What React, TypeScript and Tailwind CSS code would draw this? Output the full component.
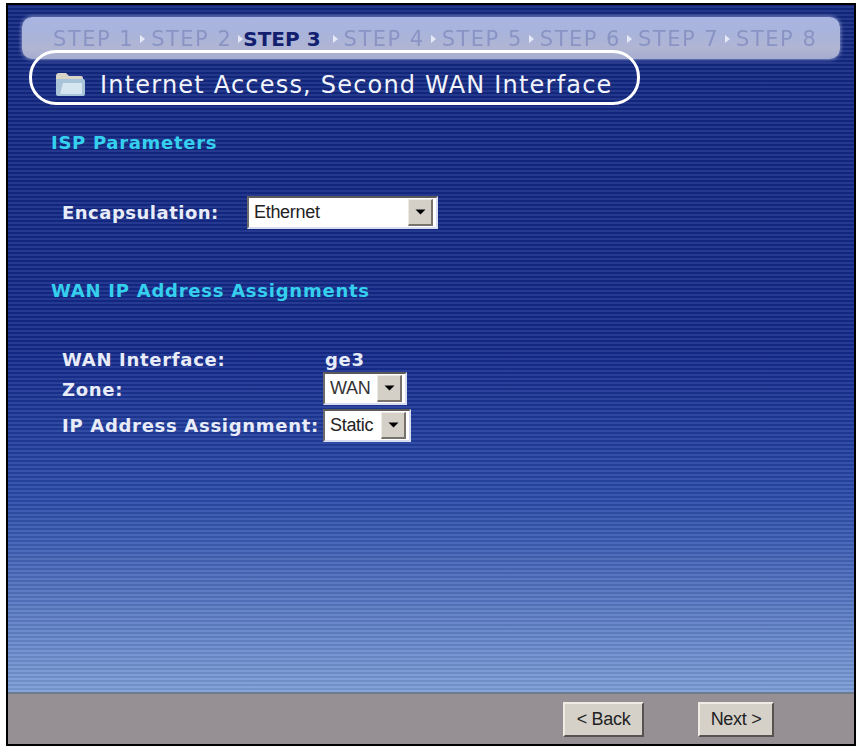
import React from "react";

const font = "font-['DejaVu_Sans','Liberation_Sans',sans-serif]";
const arial = "font-['Liberation_Sans',Arial,sans-serif]";

function Arrow() {
  return (
    <svg width="7" height="10" viewBox="0 0 7 10" className="mx-[5px] shrink-0">
      <path d="M1 1l5 4-5 4z" fill="#e6eaf8" />
    </svg>
  );
}

function Step({ n, active }: { n: number; active?: boolean }) {
  return active ? (
    <span className="text-[#12206f] font-bold text-[20px] leading-none ml-[-6px] mr-[6px]">STEP {n}</span>
  ) : (
    <span className="text-[#8a94c4] text-[21px] leading-none tracking-[1.5px] blur-[0.5px]">STEP {n}</span>
  );
}

function Select({ label, width, text }: { label: string; width: string; text?: string }) {
  return (
    <div
      className={`${width} h-[33px] flex items-center bg-white border-2 border-t-[#5c5a58] border-l-[#6e6c6a] border-r-[#d8dcf0] border-b-[#d8dcf0] pl-[5px] pr-[3px] font-normal tracking-normal ${arial}`}
    >
      <span className={`flex-1 text-[18px] tracking-[-0.3px] ${text ?? "text-[#222]"}`}>{label}</span>
      <span className="w-[25px] h-[27px] bg-[#d4d0c8] border-r-2 border-b-2 border-r-[#77736c] border-b-[#77736c] border-l border-t border-l-[#eeeae2] border-t-[#eeeae2] flex items-center justify-center">
        <svg width="11" height="6" viewBox="0 0 11 6">
          <path d="M0.5 0.5h10L5.5 5.5z" fill="#000" />
        </svg>
      </span>
    </div>
  );
}

function Button({ label, width }: { label: string; width: string }) {
  return (
    <div
      className={`${width} h-[35px] flex items-center justify-center bg-[#d5d1c9] border-2 border-t-[#efece6] border-l-[#efece6] border-r-[#55524f] border-b-[#55524f] text-[18px] tracking-[-0.3px] text-[#222] ${arial}`}
    >
      {label}
    </div>
  );
}

export default function App() {
  return (
    <div className={`w-[862px] h-[751px] bg-white pt-[3px] pl-[6px] pr-[6px] pb-[5px] relative overflow-hidden ${font}`}>
      <div className="h-full flex flex-col border-2 border-black">
        <main className="flex-1 flex flex-col pt-[12px] bg-[repeating-linear-gradient(0deg,rgba(255,255,255,0.08)_0px,rgba(255,255,255,0.08)_2px,rgba(0,0,0,0.06)_2px,rgba(0,0,0,0.06)_4px),linear-gradient(180deg,#12277f_0%,#13298a_50%,#2a4aa8_72%,#7b9cd6_100%)]">
          <div className="mx-[14px] h-[42px] rounded-[10px] bg-[linear-gradient(180deg,#a9b5e2_0%,#a9b4dc_35%,#b0b5d2_75%,#a6acd0_100%)] shadow-[0_0_4px_#a6b0da] flex items-center pl-[31px] pt-[2px]">
            <Step n={1} /><Arrow />
            <Step n={2} /><Arrow />
            <Step n={3} active /><Arrow />
            <Step n={4} /><Arrow />
            <Step n={5} /><Arrow />
            <Step n={6} /><Arrow />
            <Step n={7} /><Arrow />
            <Step n={8} />
          </div>

          <div className="flex items-center ml-[47px] mt-[3px] h-[44px]">
            <svg width="30" height="26" viewBox="0 0 30 26" className="shrink-0">
              <path d="M1 5q0-3 3-3h7l3 3h12q2 0 2 2v2H1z" fill="#d8d4c8" />
              <path d="M1 8h27q2 0 2 2v13q0 2-2 2H3q-2 0-2-2z" fill="#a9c4d8" />
              <path d="M8 12h19v11H5z" fill="#d5e6f0" />
            </svg>
            <h1 className="ml-[15px] mt-[1px] text-[24px] tracking-[1.2px] leading-none text-[#f2f4fb] whitespace-nowrap">
              Internet Access, Second WAN Interface
            </h1>
          </div>

          <h2 className="ml-[43px] mt-[27px] text-[18px] leading-[20px] font-bold tracking-[0.7px] text-[#35d0ee]">ISP Parameters</h2>

          <div className="flex items-center ml-[54px] mt-[43px]">
            <span className="w-[185px] text-[18px] font-bold tracking-[0.5px] text-[#e8ecf8]">Encapsulation:</span>
            <Select label="Ethernet" width="w-[191px]" />
          </div>

          <h2 className="ml-[43px] mt-[52px] text-[18px] leading-[20px] font-bold tracking-[0.75px] text-[#35d0ee]">WAN IP Address Assignments</h2>

          <div className="grid grid-cols-[261px_auto] justify-start items-center ml-[54px] mt-[47px] text-[18px] font-bold tracking-[0.7px] text-[#e8ecf8]">
            <span className="h-[24px] leading-[24px]">WAN Interface:</span>
            <span className="h-[24px] leading-[24px] pl-[2px]">ge3</span>
            <span className="pt-[1px]">Zone:</span>
            <Select label="WAN" width="w-[84px]" text="text-[#333]" />
            <span className="whitespace-nowrap mt-[4px]">IP Address Assignment:</span>
            <div className="mt-[4px]">
              <Select label="Static" width="w-[88px]" />
            </div>
          </div>
        </main>

        <footer className="h-[52px] shrink-0 bg-[#968f93] border-t-2 border-t-[#6f7b8c] flex items-center justify-end pr-[80px] gap-[54px]">
          <Button label="< Back" width="w-[81px]" />
          <Button label="Next >" width="w-[76px]" />
        </footer>
      </div>

      <div className="absolute left-[29px] top-[50px] w-[611px] h-[55px] rounded-[27px] border-[3px] border-white pointer-events-none" />
    </div>
  );
}
